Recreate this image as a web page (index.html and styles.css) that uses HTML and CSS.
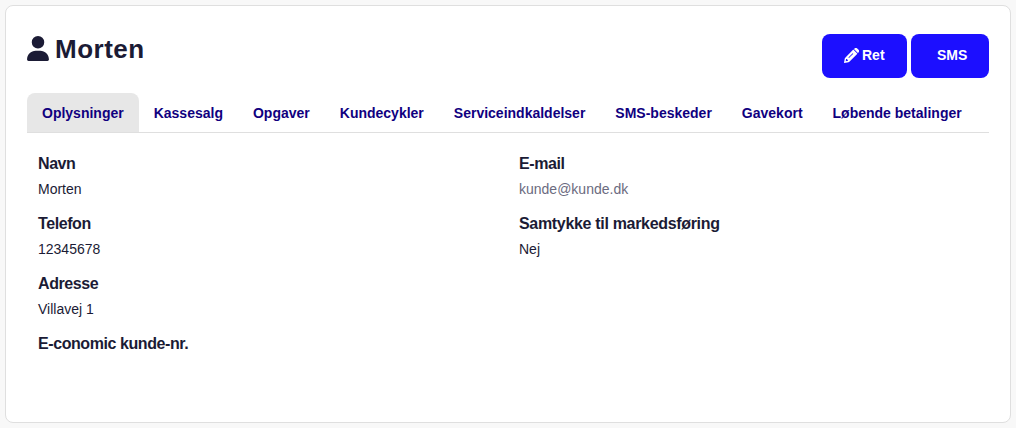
FILE: index.html
```html
<!DOCTYPE html>
<html lang="da">
<head>
  <meta charset="UTF-8">
  <title>Morten</title>
  <link rel="stylesheet" href="styles.css">
</head>
<body>

  <div class="card">
    <!-- Customer name and actions -->
    <div class="header">
      <h1>
        <svg class="user-icon" viewBox="0 0 448 512"><path d="M224 256a128 128 0 1 0 0-256 128 128 0 1 0 0 256zm-45.700 48C79.800 304 0 383.800 0 482.300 0 498.700 13.300 512 29.700 512H418.300c16.400 0 29.700-13.300 29.700-29.700C448 383.800 368.200 304 269.700 304H178.300z"/></svg>
        <span>Morten</span>
      </h1>
      <div class="actions">
        <button class="btn btn-edit">
          <svg class="pencil-icon" viewBox="0 0 16 16"><path d="M10.600 1.100l.7-.6a2 2 0 0 1 2.800 0l1.400 1.400a2 2 0 0 1 0 2.800l-.7.700zM9.900 1.700l4.400 4.400-8.300 8.300c-.4.400-.8.600-1.300.8L.3 16 0 15.700l.8-4.400c.2-.5.400-.9.800-1.300zM2.300 11.800l-.5 2.400 2.400-.5v-1.100h-.9v-.8zM9.300 5.500l-4.600 4.600.6.600 4.600-4.600z" fill-rule="evenodd"/></svg>
          <span>Ret</span>
        </button>
        <button class="btn btn-sms">SMS</button>
      </div>
    </div>

    <!-- Tabs -->
    <nav class="tabs">
      <a href="#" class="active">Oplysninger</a>
      <a href="#">Kassesalg</a>
      <a href="#">Opgaver</a>
      <a href="#">Kundecykler</a>
      <a href="#">Serviceindkaldelser</a>
      <a href="#">SMS-beskeder</a>
      <a href="#">Gavekort</a>
      <a href="#">Løbende betalinger</a>
    </nav>

    <!-- Customer details -->
    <div class="details">
      <dl>
        <dt>Navn</dt>
        <dd>Morten</dd>
        <dt>Telefon</dt>
        <dd>12345678</dd>
        <dt>Adresse</dt>
        <dd>Villavej 1</dd>
        <dt>E-conomic kunde-nr.</dt>
      </dl>
      <dl>
        <dt>E-mail</dt>
        <dd><a href="#">kunde@kunde.dk</a></dd>
        <dt class="consent">Samtykke til markedsføring</dt>
        <dd>Nej</dd>
      </dl>
    </div>
  </div>

</body>
</html>
```
FILE: styles.css
```css
* {
  box-sizing: border-box;
}

body {
  margin: 0;
  padding: 5px;
  height: 428px;
  background: #f8f8f8;
  color: #1b1b35;
  font-family: "Liberation Sans", Arial, sans-serif;
  font-size: 14px;
}

.card {
  height: 418px;
  padding: 28px 21px 0;
  background: #fff;
  border: 1px solid #dfdfdf;
  border-radius: 8px;
}

.header {
  display: flex;
  justify-content: space-between;
  height: 59px;
}

h1 {
  display: flex;
  align-items: flex-start;
  gap: 6px;
  margin: 0;
  font-size: 26px;
  line-height: 30px;
  letter-spacing: 0.5px;
}

.user-icon {
  width: 22px;
  height: 25px;
  margin-top: 2px;
  fill: #1b1b35;
}

.actions {
  display: flex;
  gap: 4px;
}

.btn {
  display: flex;
  align-items: center;
  height: 44px;
  padding: 0 22px 2px;
  border: none;
  border-radius: 8px;
  background: #1c0fff;
  color: #fff;
  font-family: "Liberation Sans", Arial, sans-serif;
  font-size: 14px;
  font-weight: bold;
}

.btn-edit {
  width: 85px;
  gap: 3px;
}

.btn-sms {
  width: 78px;
  padding-left: 26px;
}

.pencil-icon {
  width: 15px;
  height: 15px;
  fill: #fff;
}

/* Tabs */
.tabs {
  display: flex;
  height: 40px;
  border-bottom: 1px solid #dfdfdf;
}

.tabs a {
  padding: 0 15px;
  border-radius: 8px 8px 0 0;
  color: #10007f;
  font-size: 14px;
  font-weight: bold;
  line-height: 40px;
  text-decoration: none;
  white-space: nowrap;
}

.tabs .active {
  background: #e7e7e7;
}

/* Details */
.details {
  display: grid;
  grid-template-columns: 1fr 1fr;
  padding-top: 20px;
}

dl {
  margin: 0;
  padding-left: 11px;
}

dt {
  height: 22px;
  font-size: 16px;
  font-weight: bold;
  line-height: 22px;
  letter-spacing: -0.42px;
}

.consent {
  letter-spacing: -0.32px;
}

dd {
  height: 38px;
  margin: 0;
  line-height: 28px;
}

dd a {
  color: #6b6b80;
  text-decoration: none;
}
```
